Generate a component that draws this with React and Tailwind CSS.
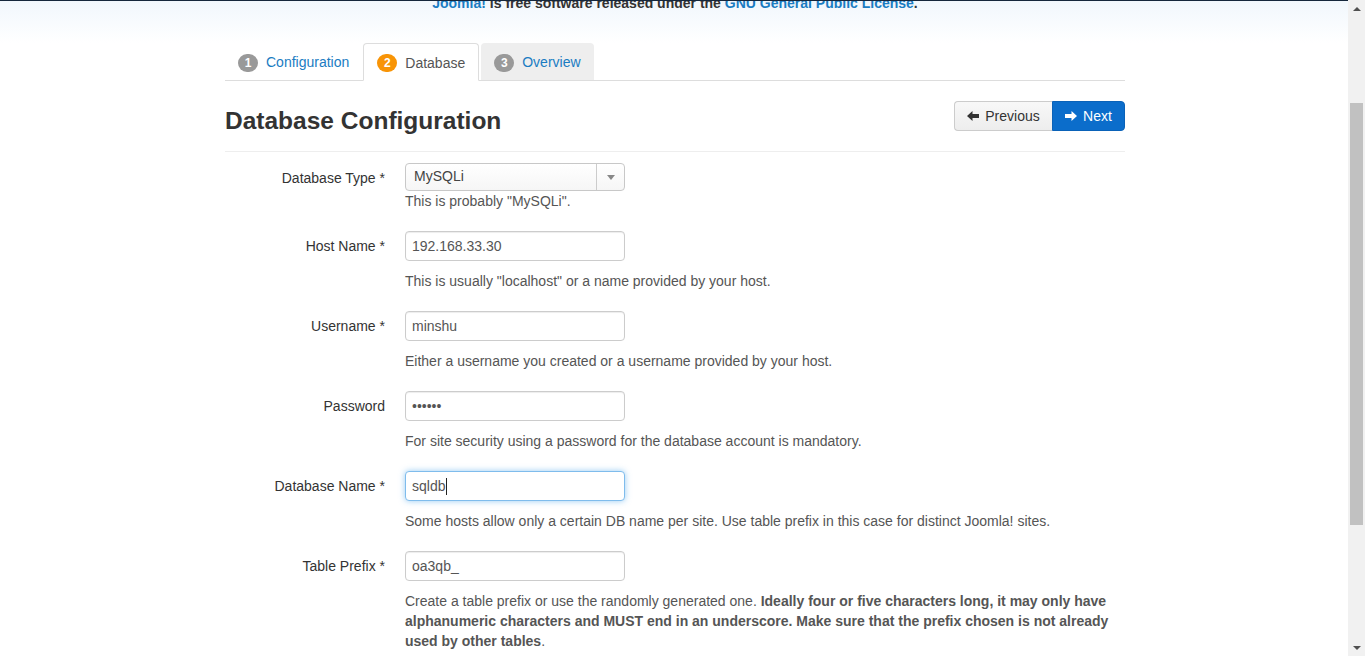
import React from 'react';

const font = { fontFamily: '"Liberation Sans", Arial, sans-serif' };

const Arrow = ({ dir = 'left', className = '' }) => (
  <svg width="12" height="10" viewBox="0 0 12 10" className={className} fill="currentColor">
    {dir === 'left' ? (
      <path d="M0 5 L5.5 0 L5.5 3 L12 3 L12 7 L5.5 7 L5.5 10 Z" />
    ) : (
      <path d="M12 5 L6.5 0 L6.5 3 L0 3 L0 7 L6.5 7 L6.5 10 Z" />
    )}
  </svg>
);

const Badge = ({ n, color }) => (
  <span
    className={`inline-flex items-center justify-center h-[18px] min-w-[20px] px-[6px] rounded-[9px] text-[12px] font-bold text-white leading-none ${color}`}
  >
    {n}
  </span>
);

const Field = ({ label, required, children, help, helpGap = 'mt-[10px]' }) => (
  <div className="flex mb-[20px]">
    <div className="w-[160px] shrink-0 text-right pt-[5px] leading-[20px] text-[#333]">
      {label}
      {required && ' *'}
    </div>
    <div className="ml-[20px] flex-1">
      {children}
      <div className={`${helpGap} leading-[20px] text-[#555]`}>{help}</div>
    </div>
  </div>
);

const TextBox = ({ value, focused }) => (
  <div
    className={`w-[220px] h-[30px] flex items-center px-[6px] rounded-[4px] border bg-white text-[#555] ${
      focused
        ? 'border-[#7fbcec] shadow-[0_0_6px_rgba(82,168,236,0.6)]'
        : 'border-[#ccc] shadow-[inset_0_1px_1px_rgba(0,0,0,0.075)]'
    }`}
  >
    <span>{value}</span>
    {focused && <span className="inline-block w-px h-[17px] bg-[#222] ml-px" />}
  </div>
);

export default function App() {
  return (
    <div className="w-[1365px] h-[656px] overflow-hidden flex bg-white text-[14px]" style={font}>
      <div className="flex-1 flex flex-col">
        {/* header strip, scrolled mostly out of view */}
        <div className="h-[43px] shrink-0 border-t border-[#14263b] bg-linear-to-b from-[#f1f7fc] via-[#f8fbfe] to-white overflow-hidden">
          <div className="-mt-[8px] pl-[2px] leading-[20px] text-center font-bold text-[#333]">
            <span className="text-[#1a7cc2]">Joomla!</span> is free software released under the{' '}
            <span className="text-[#1a7cc2]">GNU General Public License</span>.
          </div>
        </div>

        <div className="w-[900px] ml-[225px]">
          {/* tabs */}
          <div className="flex h-[38px] border-b border-[#ddd]">
            <div className="flex items-center gap-[8px] pt-[2px] pl-[13px] pr-[12px] mr-[2px] text-[#1a7cc2]">
              <Badge n="1" color="bg-[#999]" />
              Configuration
            </div>
            <div className="flex items-center gap-[8px] pt-[2px] px-[13px] mr-[2px] -mb-px h-[38px] bg-white border border-[#ddd] border-b-white rounded-t-[4px] text-[#555]">
              <Badge n="2" color="bg-[#f89406]" />
              Database
            </div>
            <div className="flex items-center gap-[8px] pt-[2px] px-[13px] bg-[#eee] rounded-t-[4px] text-[#1a7cc2]">
              <Badge n="3" color="bg-[#999]" />
              Overview
            </div>
          </div>

          {/* title row */}
          <div className="mt-[20px] h-[51px] flex items-start justify-between border-b border-[#eee]">
            <h3 className="text-[24.5px] font-bold leading-[38px] mt-[1px] text-[#333]">Database Configuration</h3>
            <div className="flex">
              <button className="h-[30px] w-[98px] flex items-center justify-center gap-[6px] border border-[#ccc] border-r-0 rounded-l-[4px] bg-linear-to-b from-[#f8f8f8] to-[#ededed] text-[#333]">
                <Arrow dir="left" />
                Previous
              </button>
              <button className="h-[30px] w-[73px] flex items-center justify-center gap-[6px] border border-[#0a62b8] rounded-r-[4px] bg-[#0b6dcb] text-white">
                <Arrow dir="right" />
                Next
              </button>
            </div>
          </div>

          {/* form */}
          <div className="mt-[11px]">
            <Field label="Database Type" required help={'This is probably "MySQLi".'} helpGap="mt-0">
              <div className="w-[220px] h-[28px] flex rounded-[4px] border border-[#c8c8c8] bg-linear-to-b from-white to-[#f6f6f6] text-[#444]">
                <div className="flex-1 flex items-center pl-[8px] pb-[2px]">MySQLi</div>
                <div className="w-[28px] flex items-center justify-center border-l border-[#ccc]">
                  <svg width="8" height="5" viewBox="0 0 8 5">
                    <path d="M0 0 L8 0 L4 5 Z" fill="#888" />
                  </svg>
                </div>
              </div>
            </Field>
            <Field label="Host Name" required help={'This is usually "localhost" or a name provided by your host.'}>
              <TextBox value="192.168.33.30" />
            </Field>
            <Field label="Username" required help="Either a username you created or a username provided by your host.">
              <TextBox value="minshu" />
            </Field>
            <Field label="Password" help="For site security using a password for the database account is mandatory.">
              <TextBox value="••••••" />
            </Field>
            <Field
              label="Database Name"
              required
              help="Some hosts allow only a certain DB name per site. Use table prefix in this case for distinct Joomla! sites."
            >
              <TextBox value="sqldb" focused />
            </Field>
            <Field
              label="Table Prefix"
              required
              help={
                <>
                  Create a table prefix or use the randomly generated one.{' '}
                  <strong>
                    Ideally four or five characters long, it may only have alphanumeric characters and MUST end in an
                    underscore. Make sure that the prefix chosen is not already used by other tables
                  </strong>
                  .
                </>
              }
            >
              <TextBox value="oa3qb_" />
            </Field>
          </div>
        </div>
      </div>

      {/* scrollbar */}
      <div className="w-[17px] shrink-0 bg-[#f1f1f1] flex flex-col items-center">
        <div className="h-[17px] flex items-center justify-center">
          <svg width="8" height="4" viewBox="0 0 8 4">
            <path d="M0 4 L4 0 L8 4 Z" fill="#505050" />
          </svg>
        </div>
        <div className="mt-[86px] w-[13px] h-[422px] bg-[#c1c1c1]" />
        <div className="flex-1" />
        <div className="h-[17px] flex items-center justify-center">
          <svg width="8" height="4" viewBox="0 0 8 4">
            <path d="M0 0 L8 0 L4 4 Z" fill="#505050" />
          </svg>
        </div>
      </div>
    </div>
  );
}
